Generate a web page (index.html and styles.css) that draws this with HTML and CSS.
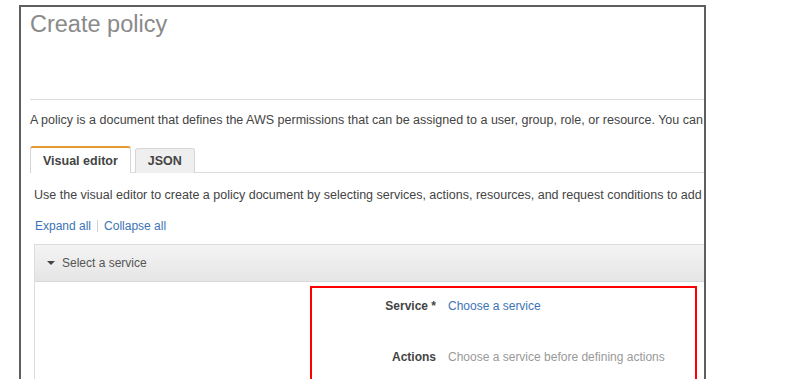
FILE: index.html
```html
<!DOCTYPE html>
<html lang="en">
<head>
  <meta charset="UTF-8">
  <title>Create policy</title>
  <link rel="stylesheet" href="styles.css">
</head>
<body>
  <div class="frame">
    <div class="page">
      <!-- header -->
      <div class="page-head">
        <h1 class="page-title">Create policy</h1>
      </div>

      <p class="intro">A policy is a document that defines the AWS permissions that can be assigned to a user, group, role, or resource. You can create and edit a policy in the visual editor and using JSON.</p>

      <!-- tabs -->
      <div class="tabs">
        <button class="tab active">Visual editor</button>
        <button class="tab">JSON</button>
      </div>

      <div class="editor">
        <p class="hint">Use the visual editor to create a policy document by selecting services, actions, resources, and request conditions to add to your policy.</p>

        <div class="toggles">
          <a href="#" class="link">Expand all</a>
          <span class="sep"></span>
          <a href="#" class="link">Collapse all</a>
        </div>

        <!-- permission block -->
        <div class="section">
          <div class="section-head">
            <span class="caret"></span>
            <span>Select a service</span>
          </div>
          <div class="section-body">
            <div class="fields">
              <div class="field-row">
                <span class="field-label">Service *</span>
                <a href="#" class="link">Choose a service</a>
              </div>
              <div class="field-row">
                <span class="field-label">Actions</span>
                <span class="muted">Choose a service before defining actions</span>
              </div>
            </div>
          </div>
        </div>
      </div>
    </div>
  </div>
</body>
</html>
```

FILE: styles.css
```css
html, body {
  margin: 0;
  padding: 0;
  height: 100%;
  overflow: hidden;
  background: #fff;
  font-family: 'Liberation Sans', Arial, sans-serif;
  color: #444;
}

.frame {
  width: 687px;
  height: 100%;
  margin: 5px 0 0 19px;
  box-sizing: border-box;
  border: 2px solid #5f5f5f;
  border-bottom: none;
  overflow: hidden;
}

.page {
  width: 900px;
  padding-left: 9px;
  white-space: nowrap;
}

/* header */
.page-head {
  height: 93px;
  box-sizing: border-box;
  border-bottom: 1px solid #dcdcdc;
  padding-top: 3px;
}

.page-title {
  margin: 0;
  font-size: 23.5px;
  line-height: 28px;
  font-weight: normal;
  color: #8a8a8a;
}

.intro {
  margin: 12px 0 0;
  font-size: 12.5px;
  line-height: 16px;
}

/* tabs */
.tabs {
  display: flex;
  align-items: flex-end;
  gap: 4px;
  margin-top: 18px;
  height: 26px;
  border-bottom: 1px solid #dcdcdc;
}

.tab {
  font-family: inherit;
  font-size: 12.5px;
  font-weight: bold;
  color: #444;
  padding: 0 12px;
  height: 25px;
  margin-bottom: -1px;
  border: 1px solid #d6d6d6;
  border-bottom: none;
  border-radius: 3px 3px 0 0;
  background: #efefef;
  cursor: pointer;
}

.tab.active {
  height: 27px;
  border-top: 2px solid #e39a2f;
  background: #fff;
  padding: 0 12px;
}

.editor {
  padding-left: 4px;
}

.hint {
  margin: 14px 0 0;
  font-size: 12.5px;
  line-height: 16px;
}

.toggles {
  display: flex;
  align-items: center;
  gap: 6px;
  margin-top: 15px;
  padding-left: 1px;
  font-size: 12px;
  line-height: 16px;
}

.link {
  color: #3b74b6;
  text-decoration: none;
}

.sep {
  width: 1px;
  height: 12px;
  background: #d0d0d0;
}

/* permission block */
.section {
  margin-top: 10px;
  border: 1px solid #dcdcdc;
  border-right: none;
}

.section-head {
  display: flex;
  align-items: center;
  gap: 7px;
  height: 36px;
  padding-left: 12px;
  border-bottom: 1px solid #d8d8d8;
  background: linear-gradient(#f4f4f4, #e5e5e5);
  font-size: 12px;
  color: #555;
}

.caret {
  width: 0;
  height: 0;
  border-left: 4px solid transparent;
  border-right: 4px solid transparent;
  border-top: 4px solid #444;
}

.section-body {
  padding: 4px 0 0 275px;
  height: 200px;
}

.fields {
  width: 387px;
  height: 200px;
  box-sizing: border-box;
  border: 2px solid #f00;
  padding-top: 10px;
}

.field-row {
  display: flex;
  gap: 12px;
  height: 51px;
  font-size: 12px;
  line-height: 16px;
}

.field-label {
  width: 124px;
  text-align: right;
  font-weight: bold;
  color: #444;
}

.muted {
  color: #999;
}
```
